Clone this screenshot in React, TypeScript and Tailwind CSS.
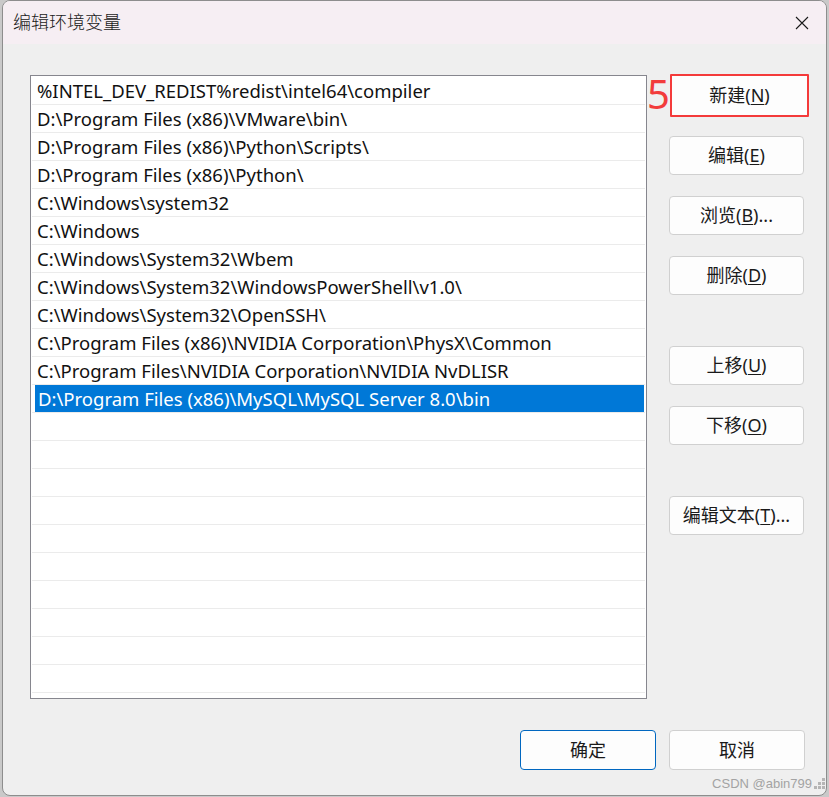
import React from "react";

const PATHS = [
  "%INTEL_DEV_REDIST%redist\\intel64\\compiler",
  "D:\\Program Files (x86)\\VMware\\bin\\",
  "D:\\Program Files (x86)\\Python\\Scripts\\",
  "D:\\Program Files (x86)\\Python\\",
  "C:\\Windows\\system32",
  "C:\\Windows",
  "C:\\Windows\\System32\\Wbem",
  "C:\\Windows\\System32\\WindowsPowerShell\\v1.0\\",
  "C:\\Windows\\System32\\OpenSSH\\",
  "C:\\Program Files (x86)\\NVIDIA Corporation\\PhysX\\Common",
  "C:\\Program Files\\NVIDIA Corporation\\NVIDIA NvDLISR",
  "D:\\Program Files (x86)\\MySQL\\MySQL Server 8.0\\bin",
];

const ROW_COUNT = 22;
const SELECTED = 11;

const FONT = "font-['Noto_Sans','Noto_Sans_CJK_SC',sans-serif]";

// label text with an underlined access key, e.g. 新建(N)
function Label({ text, hotkey, tail = "" }: { text: string; hotkey: string; tail?: string }) {
  return (
    <span>
      {text}(<span className="underline underline-offset-2">{hotkey}</span>){tail}
    </span>
  );
}

function Button({
  children,
  className = "",
  primary = false,
}: {
  children: React.ReactNode;
  className?: string;
  primary?: boolean;
}) {
  return (
    <div
      className={`flex h-[39px] w-[135px] items-center justify-center rounded-[4px] border bg-[#fdfdfd] text-[18px] text-[#1a1a1a] ${
        primary ? "border-[#0067c0]" : "border-[#d0d0d0]"
      } ${className}`}
    >
      {children}
    </div>
  );
}

function CloseIcon() {
  return (
    <svg width="14" height="14" viewBox="0 0 14 14" className="text-[#1a1a1a]">
      <path d="M1 1 L13 13 M13 1 L1 13" stroke="currentColor" strokeWidth="1.1" fill="none" />
    </svg>
  );
}

function Grip() {
  const dots = [
    [8, 0],
    [4, 4],
    [8, 4],
    [0, 8],
    [4, 8],
    [8, 8],
  ];
  return (
    <svg width="11" height="11" viewBox="0 0 11 11">
      {dots.map(([x, y]) => (
        <rect key={`${x}-${y}`} x={x} y={y} width="3" height="3" fill="#b5b5b5" />
      ))}
    </svg>
  );
}

export default function App() {
  return (
    <div className={`h-[797px] w-[829px] overflow-hidden bg-[#c9c9c9] ${FONT}`}>
      <div className="ml-[2px] flex h-[796px] w-[825px] flex-col overflow-hidden rounded-[8px] border border-[#8d8d8d] bg-[#efefef]">
        {/* title bar */}
        <div className="flex h-[43px] shrink-0 items-center justify-between bg-[#f6eef3] pl-[10px] pr-[17px]">
          <span className="text-[18px] font-light text-[#1a1a1a]">编辑环境变量</span>
          <CloseIcon />
        </div>

        <div className="flex flex-1 flex-col">
          <div className="flex pt-[31px]">
            {/* path list */}
            <div className="ml-[27px] h-[624px] w-[617px] border border-[#86868e] bg-white p-[1px]">
              {Array.from({ length: ROW_COUNT }).map((_, i) => {
                const path = PATHS[i];
                const selected = i === SELECTED;
                return (
                  <div key={i} className="h-[28px] border-b border-[#ebebeb] pr-[1px]">
                    {selected ? (
                      <div className="ml-[3px] flex h-[27px] items-center bg-[#0078d7] pt-[1px] pl-[3px] text-[18.5px] leading-none whitespace-nowrap text-white">
                        {path}
                      </div>
                    ) : (
                      <div className="flex h-[27px] items-center pt-[1px] pl-[5px] text-[18.5px] leading-none whitespace-nowrap text-[#111]">
                        {path ?? ""}
                      </div>
                    )}
                  </div>
                );
              })}
            </div>

            {/* action buttons */}
            <div className="flex flex-col pt-[1px]">
              <div className="flex items-start">
                <span className="-mt-[2px] w-[22px] shrink-0 text-[40px] leading-none text-[#f23b3b]">5</span>
                <div className="ml-[1px] -mt-[2px] rounded-[1px] border-[2px] border-[#f43a3a]">
                  <Button className="h-[37px] w-[132px] rounded-none border-0">
                    <Label text="新建" hotkey="N" />
                  </Button>
                </div>
              </div>
              <div className="ml-[22px] mt-[19px] flex flex-col gap-[21px]">
                <Button>
                  <Label text="编辑" hotkey="E" />
                </Button>
                <Button>
                  <Label text="浏览" hotkey="B" tail="..." />
                </Button>
                <Button>
                  <Label text="删除" hotkey="D" />
                </Button>
              </div>
              <div className="ml-[22px] mt-[51px] flex flex-col gap-[21px]">
                <Button>
                  <Label text="上移" hotkey="U" />
                </Button>
                <Button>
                  <Label text="下移" hotkey="O" />
                </Button>
              </div>
              <div className="ml-[22px] mt-[51px]">
                <Button>
                  <Label text="编辑文本" hotkey="T" tail="..." />
                </Button>
              </div>
            </div>
          </div>

          {/* footer */}
          <div className="mt-[31px] flex justify-end gap-[13px] pr-[21px]">
            <Button primary className="h-[40px] w-[136px]">
              确定
            </Button>
            <Button className="h-[40px] w-[136px]">取消</Button>
          </div>
          <div className="mt-[4px] flex items-center justify-end gap-[2px] pr-[1px]">
            <span className="font-['Liberation_Sans',sans-serif] text-[13px] text-[#a3a3a3]">CSDN @abin799</span>
            <Grip />
          </div>
        </div>
      </div>
    </div>
  );
}
